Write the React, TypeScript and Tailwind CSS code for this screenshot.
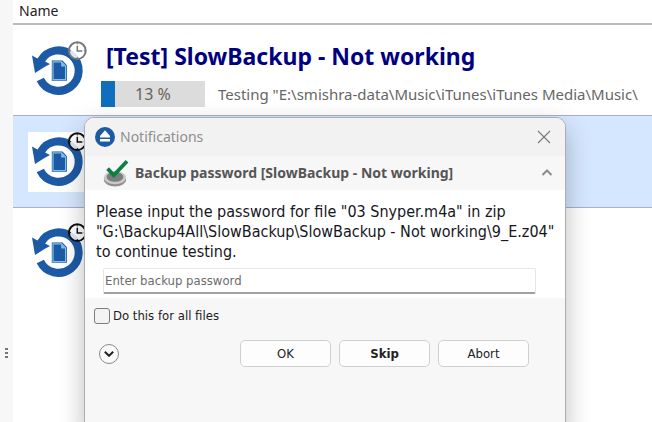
import { clsx } from "clsx";

interface BackupIconProps {
  clockColor: string;
  className?: string;
}

const BackupIcon = ({ clockColor, className }: BackupIconProps) => {
  return (
    <svg viewBox="0 0 60 60" className={clsx("size-[60px] shrink-0", className)} aria-hidden="true">
      {/* Restore arrow */}
      <path d="M12.3 38.4A20.2 20.2 0 1 0 13 19.5" fill="none" stroke="#1d5aa6" strokeWidth="8" />
      <path d="M4 14.5 9.5 17.5 14 15 17 20.5 22 23 16.5 26 7 32Z" fill="#1d5aa6" />
      {/* Document */}
      <path d="M23.8 19.6h10.7l4.4 4.6v15.6H23.8Z" fill="#1d4f94" />
      <path d="M25 20.8h8.6l4 4.2v13.6H25Z" fill="#1d5aa6" stroke="#7cc4ea" strokeWidth="1.2" />
      <path d="M33.2 20.8v4.6h4.4Z" fill="#7cc4ea" />
      {/* Clock */}
      <circle cx="49.3" cy="9.7" r="8.4" fill="#fff" fillOpacity="0.85" stroke={clockColor} strokeWidth="2" />
      <path d="M49.3 4.8v5.2h5" fill="none" stroke={clockColor} strokeWidth="1.5" />
      <path d="M49.3 2.2v1.2M49.3 16v1.2M41.8 9.7H43M55.8 9.7H57" stroke={clockColor} strokeWidth="1" />
    </svg>
  );
};

const EjectLogo = () => (
  <svg viewBox="0 0 20 20" className="size-5" aria-hidden="true">
    <circle cx="10" cy="10" r="10" fill="#1d5aa6" />
    <path d="M10 3.2 15 9v1.4H5V9Z" fill="#fff" />
    <path d="M5 12h10v2.6H5Z" fill="#fff" />
  </svg>
);

const CheckSeal = () => (
  <svg viewBox="0 0 26 28" className="h-7 w-[26px]" aria-hidden="true">
    <ellipse cx="12" cy="20.8" rx="11.2" ry="6.8" fill="#8f8f8f" />
    <ellipse cx="12" cy="18.6" rx="11.2" ry="6.6" fill="#c9c9c9" />
    <ellipse cx="12" cy="18" rx="8.4" ry="4.8" fill="#7d7d7d" />
    <path d="m4.6 9.6 6.2 6.6L24 2.2" fill="none" stroke="#0b8043" strokeWidth="3.8" />
  </svg>
);

const dialogButton =
  "h-[27px] w-[91px] rounded-[5px] border border-[#d0d0d0] bg-[#fdfdfd] font-[DejaVu_Sans_Condensed,sans-serif] text-[13px] leading-none";

const NotificationDialog = () => {
  return (
    <section
      role="dialog"
      aria-labelledby="dialog-title"
      className="absolute top-[117px] -bottom-4 left-[84px] flex w-[482px] flex-col overflow-hidden rounded-t-[10px] border border-[#a9adb8] bg-[#f7f7f7] shadow-[0_10px_26px_rgba(0,0,0,0.26)]"
    >
      {/* Title bar */}
      <header className="flex h-[38px] shrink-0 items-center gap-[5px] bg-[#f2f2f2] pr-[14px] pl-[10px]">
        <EjectLogo />
        <h2 id="dialog-title" className="flex-1 text-[14px] leading-5 text-[#8e8e8e]">
          Notifications
        </h2>
        <button type="button" aria-label="Close">
          <svg viewBox="0 0 14 14" className="size-[14px]" fill="none" stroke="#777" strokeWidth="1.1">
            <path d="m1 1 12 12M13 1 1 13" />
          </svg>
        </button>
      </header>

      {/* Group header */}
      <div className="flex h-[34px] shrink-0 items-center gap-[6px] pr-[12px] pl-[18px]">
        <CheckSeal />
        <h3 className="flex-1 text-[14px] leading-5 font-bold text-[#555]">
          Backup password [SlowBackup - Not working]
        </h3>
        <button type="button" aria-label="Collapse">
          <svg viewBox="0 0 12 8" className="h-2 w-3" fill="none" stroke="#8c8c8c" strokeWidth="2">
            <path d="M1.5 6 6 1.5 10.5 6" />
          </svg>
        </button>
      </div>

      <div className="shrink-0 bg-white px-[11px] pt-3 pb-1">
        <p className="font-[DejaVu_Sans_Condensed,sans-serif] text-[16px] leading-5 whitespace-nowrap text-[#16161c]">
          Please input the password for file "03 Snyper.m4a" in zip
          <br />
          "G:\Backup4All\SlowBackup\SlowBackup - Not working\9_E.z04"
          <br />
          to continue testing.
        </p>
        <input
          type="text"
          aria-label="Backup password"
          placeholder="Enter backup password"
          className="mt-[6px] ml-[7px] block h-[26px] w-[433px] rounded-[2px] border border-b-2 border-[#e6e6e6] border-b-[#a0a0a0] bg-white px-px font-[DejaVu_Sans_Condensed,sans-serif] text-[13px] placeholder:text-[#6c6c6c]"
        />
      </div>

      <label className="mt-2 flex h-5 shrink-0 items-center gap-[3px] pl-[9px] font-[DejaVu_Sans_Condensed,sans-serif] text-[13px] leading-5 text-[#1c1c24]">
        <input
          type="checkbox"
          className="size-4 appearance-none rounded-[3px] border border-[#7d7d7d] bg-[#f3f3f3] checked:bg-[#1d5aa6]"
        />
        Do this for all files
      </label>

      <footer className="mt-[14px] flex shrink-0 items-center gap-2 pr-[36px] pl-[14px]">
        <button
          type="button"
          aria-label="More options"
          className="mr-auto flex size-5 items-center justify-center rounded-full border border-[#8a8a8a] bg-[#fafafa]"
        >
          <svg viewBox="0 0 10 6" className="h-[6px] w-[10px]" fill="none" stroke="#222" strokeWidth="2">
            <path d="m0.8 0.8 4.2 4 4.2-4" />
          </svg>
        </button>
        <button type="button" className={dialogButton}>OK</button>
        <button type="button" className={clsx(dialogButton, "font-bold")}>Skip</button>
        <button type="button" className={dialogButton}>Abort</button>
      </footer>
    </section>
  );
};

const App = () => {
  return (
    <div className="relative flex h-screen overflow-hidden bg-white font-[Noto_Sans,sans-serif] text-[#222]">
      {/* Splitter */}
      <div className="flex w-[13px] shrink-0 flex-col bg-[#f7f7f7] pt-[348px] pl-[5px]">
        <svg viewBox="0 0 3 11" className="h-[11px] w-[3px]" fill="#777" aria-hidden="true">
          <path d="M0 0h3v2H0ZM0 4h3v2H0ZM0 8h3v2H0Z" />
        </svg>
      </div>

      <main className="min-w-0 flex-1">
        <div className="h-[25px] border-b-2 border-[#bcbcbc] pl-[6px] text-[14px] leading-[21px]">Name</div>

        <div className="flex h-[91px] gap-[13px] border-b border-[#a9afc9] pt-4 pl-[15px]">
          <BackupIcon clockColor="#777" />
          <div className="min-w-0 flex-1">
            <h1 className="pl-[5px] text-[23px] leading-[30px] font-bold whitespace-nowrap text-[#00007f]">
              [Test] SlowBackup - Not working
            </h1>
            <div className="mt-[10px] flex items-center gap-[13px]">
              <div className="relative h-[26px] w-[104px] shrink-0 bg-[#dcdcdc]">
                <div className="h-full bg-[#106ebe]" style={{ width: "13%" }} />
                <span className="absolute inset-0 text-center text-[16px] leading-[27px] text-[#6b6259]">13 %</span>
              </div>
              <p className="text-[15px] leading-5 whitespace-nowrap text-[#666]">
                Testing "E:\smishra-data\Music\iTunes\iTunes Media\Music\
              </p>
            </div>
          </div>
        </div>

        <div className="h-[92px] border-b border-[#a9afc9] bg-[#d5e7ff] pt-4 pl-[15px]">
          <BackupIcon clockColor="#111" className="bg-white" />
        </div>

        <div className="pt-[15px] pl-[15px]">
          <BackupIcon clockColor="#111" />
        </div>
      </main>

      <NotificationDialog />
    </div>
  );
};

export default App;
